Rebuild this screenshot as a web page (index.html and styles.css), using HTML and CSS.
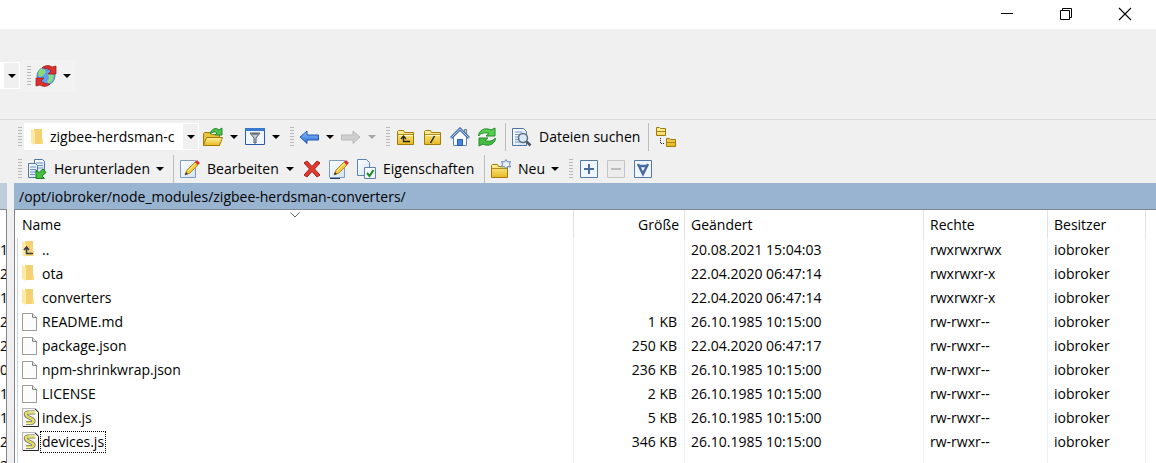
FILE: index.html
```
<!DOCTYPE html>
<html lang="de">
<head>
    <meta charset="UTF-8">
    <title>zigbee-herdsman-converters</title>
    <meta name="viewport" content="width=device-width, initial-scale=1.0">
    <link rel="stylesheet" href="styles.css">
</head>
<body>
    <!-- shared icons -->
    <svg class="sprite" aria-hidden="true">
        <defs>
            <linearGradient id="gold" x1="0" y1="0" x2="0" y2="1">
                <stop offset="0" stop-color="#fff2a0"/><stop offset="1" stop-color="#e6b820"/>
            </linearGradient>
            <linearGradient id="paper" x1="0" y1="0" x2="1" y2="1">
                <stop offset="0" stop-color="#ffffff"/><stop offset="1" stop-color="#cfe3f7"/>
            </linearGradient>
            <linearGradient id="blue" x1="0" y1="0" x2="0" y2="1">
                <stop offset="0" stop-color="#8fc0ff"/><stop offset="1" stop-color="#2a6bd8"/>
            </linearGradient>
        </defs>
        <symbol id="folder" viewBox="0 0 14 18">
            <path d="M3 1h8v10l1 1v4H3z" fill="#f5d271"/>
            <path d="M0 1l4 2v14l-4-2z" fill="#ffe9a6"/>
            <path d="M10 11h2v5h-2z" fill="#fbdc80"/>
        </symbol>
        <symbol id="file" viewBox="0 0 16 20">
            <path d="M.5 1.500h10l4 4v13H.5z" fill="#fcfcfc" stroke="#9a9a9a"/>
            <path d="M10.500 1.500v4h4" fill="#e8e8e8" stroke="#858585"/>
        </symbol>
        <symbol id="script" viewBox="0 0 18 20">
            <path d="M.5 .5h13l3 3v15H.5z" fill="#f6f6f6" stroke="#b5b5b5"/>
            <path d="M13 1l3.500 3.500v14H1" fill="none" stroke="#222"/>
            <path d="M13 4.500H6.500C3 4.500 3 7.500 6 9l4 2c3 2 1 4-1 4H4" fill="none" stroke="#77776c" stroke-width="4"/>
            <path d="M13 4.500H6.500C3 4.500 3 7.500 6 9l4 2c3 2 1 4-1 4H4" fill="none" stroke="#e2dd62" stroke-width="2.500"/>
            <path d="M7 4h6M4 15.500h5" stroke="#f4f2b4"/>
        </symbol>
        <symbol id="gold-folder" viewBox="0 0 20 20">
            <path d="M1.500 17.500v-13l1-1h5l1 2h9v12z" fill="url(#gold)" stroke="#a17a0c"/>
            <path d="M2 7.500h15" stroke="#b58d18"/><path d="M3 8.500h14" stroke="#fff8c8"/>
        </symbol>
        <symbol id="pencil-page" viewBox="0 0 20 20">
            <path d="M.5 1.500h15v17H.5z" fill="url(#paper)" stroke="#7d9cc0"/>
            <path d="M5 16l2-5 8-8 3 3-8 8z" fill="#f9c93b" stroke="#b88a30"/>
            <path d="M8 12l8-8" stroke="#fff0a0"/>
            <path d="M15 3l2-2 3 3-2 2z" fill="#d83434"/>
            <path d="M5 16l1-3 2 2z" fill="#333"/>
        </symbol>
    </svg>

    <header class="titlebar">
        <button type="button" class="caption" aria-label="Minimieren">
            <svg width="14" height="14"><path d="M1 6.500h12" stroke="#000"/></svg>
        </button>
        <button type="button" class="caption" aria-label="Verkleinern">
            <svg width="14" height="14"><path d="M1.500 3.500h9v9h-9zM3.500 3.500v-2h9v9h-2" fill="none" stroke="#000"/></svg>
        </button>
        <button type="button" class="caption" aria-label="Schließen">
            <svg width="14" height="14"><path d="M1 1l12 12M13 1L1 13" stroke="#000" stroke-width="1.100"/></svg>
        </button>
    </header>

    <div class="session-bar">
        <button type="button" class="combo-end" aria-label="Übertragungsoptionen"><span class="caret"></span></button>
        <div class="sync-group">
            <span class="grip"></span>
            <button type="button" class="tool split" aria-label="Synchronisieren">
                <svg width="22" height="22" viewBox="0 0 22 22">
                    <circle cx="11" cy="11" r="9" fill="#5f9ff0" stroke="#4a83bd"/>
                    <path d="M3 8c1-3 3-5 5-5l3 4-3 4-4 1zM13 9l6 1-1 5-4 4-2-3 2-2z" fill="#8bdb7a"/>
                    <path d="M7 3c3-3 7-3 10-1l4-1v8h-8l3-3c-2-2-5-3-9-3z" fill="#dd3030" stroke="#961616" stroke-width=".7"/>
                    <path d="M15 19c-3 3-7 3-10 1l-4 1v-8h8l-3 3c2 2 5 3 9 3z" fill="#dd3030" stroke="#961616" stroke-width=".7"/>
                </svg>
            </button>
            <button type="button" class="drop" aria-label="Mehr"><span class="caret"></span></button>
        </div>
    </div>

    <main class="panels">
        <section class="local">
            <div class="local-path"></div>
            <ul class="local-list">
                <li>1</li><li>2</li><li>1</li><li>2</li><li>2</li>
                <li>0</li><li>1</li><li>1</li><li>2</li><li>2</li>
            </ul>
        </section>

        <section class="remote">
            <div class="toolbar">
                <span class="grip"></span>
                <div class="combo">
                    <svg width="14" height="18"><use href="#folder"/></svg>
                    <select aria-label="Verzeichnis"><option>zigbee-herdsman-c</option></select>
                    <span class="combo-arrow"><span class="caret"></span></span>
                </div>
                <button type="button" class="tool split" aria-label="Verzeichnis öffnen">
                    <svg width="22" height="20" viewBox="0 0 22 20">
                        <path d="M1.500 18.500v-12l1-1h5l2 2h8v11z" fill="#e9c33a" stroke="#a17a0c"/>
                        <path d="M1.500 18.500l3-8h16l-3 8z" fill="url(#gold)" stroke="#a17a0c"/>
                        <path d="M8 7c1-5 6-7 9-4l3-2v7h-7l2-2c-2-2-4-1-7 1z" fill="#4fc24f" stroke="#258a2c"/>
                    </svg>
                </button>
                <button type="button" class="drop" aria-label="Mehr"><span class="caret"></span></button>
                <button type="button" class="tool split" aria-label="Filter">
                    <svg width="20" height="18" viewBox="0 0 20 18">
                        <path d="M.5 .5h19v16H.5z" fill="#f0f6ff" stroke="#2a5ba5"/>
                        <path d="M0 0h20v3H0z" fill="#3b78cf"/>
                        <path d="M5 5h10l-4 5v5H9v-5z" fill="#c5c9cf" stroke="#555b64"/>
                        <path d="M7 6h6" stroke="#444"/>
                    </svg>
                </button>
                <button type="button" class="drop" aria-label="Mehr"><span class="caret"></span></button>
                <span class="grip"></span>
                <button type="button" class="tool split" aria-label="Zurück">
                    <svg width="20" height="14" viewBox="0 0 20 14"><path d="M1 7l7-6v4h11.500v5H8v3.500z" fill="url(#blue)" stroke="#2257ae"/></svg>
                </button>
                <button type="button" class="drop" aria-label="Mehr"><span class="caret"></span></button>
                <button type="button" class="tool split" aria-label="Vorwärts" disabled>
                    <svg width="20" height="14" viewBox="0 0 20 14"><path d="M19 7l-7-6v4H.5v5H12v3.500z" fill="#cfcfcf" stroke="#bababa"/></svg>
                </button>
                <button type="button" class="drop" aria-label="Mehr" disabled><span class="caret"></span></button>
                <span class="grip"></span>
                <button type="button" class="tool" aria-label="Übergeordnetes Verzeichnis">
                    <svg width="20" height="20" viewBox="0 0 20 20"><use href="#gold-folder"/><path d="M14 14.500H7.500V10M5 12l2.500-3 2.500 3" fill="none" stroke="#222" stroke-width="1.300"/></svg>
                </button>
                <button type="button" class="tool" aria-label="Stammverzeichnis">
                    <svg width="20" height="20" viewBox="0 0 20 20"><use href="#gold-folder"/><path d="M7.500 16l4-7" stroke="#222" stroke-width="1.500"/></svg>
                </button>
                <button type="button" class="tool" aria-label="Heimverzeichnis">
                    <svg width="20" height="20" viewBox="0 0 20 20">
                        <path d="M14.500 2.500h2v5h-2z" fill="#ddd" stroke="#687d99"/>
                        <path d="M3.500 9v9.500h13V9L10 3z" fill="#f7fbff" stroke="#6284ad"/>
                        <path d="M1 11l9-9 9 9" fill="none" stroke="#4b74a8" stroke-width="3"/>
                        <path d="M1.500 10.500l8.500-8.500 8.500 8.500" fill="none" stroke="#b0cbea"/>
                        <path d="M7.500 12.500h5v6h-5z" fill="#4285e8" stroke="#2b5da8"/>
                    </svg>
                </button>
                <button type="button" class="tool" aria-label="Aktualisieren">
                    <svg width="20" height="20" viewBox="0 0 20 20">
                        <path d="M1.500 9C2 3 8 0 14 3l4-2v8h-9l3-2.500C8 5 4 6 1.500 9z" fill="#54cf50" stroke="#218a28"/>
                        <path d="M18.500 11c-.5 6-6.500 9-12.500 6l-4 2v-8h9l-3 2.500c4 1.500 8 .5 10.500-2.500z" fill="#45bd43" stroke="#218a28"/>
                    </svg>
                </button>
                <span class="sep"></span>
                <button type="button" class="labelled find">
                    <svg width="20" height="20" viewBox="0 0 20 20">
                        <path d="M.5 1.500h11l3 3v14H.5z" fill="url(#paper)" stroke="#4f75a5"/>
                        <path d="M3 5h7M3 7.500h9M3 10h3M3 12.500h3M3 15h5" stroke="#7597c2"/>
                        <circle cx="11" cy="11" r="4.500" fill="#d7e8fb" stroke="#606b79" stroke-width="1.500"/>
                        <path d="M14.500 14.500l4 4" stroke="#4d5663" stroke-width="2.500"/>
                    </svg>
                    Dateien suchen
                </button>
                <span class="sep"></span>
                <button type="button" class="tool" aria-label="Verzeichnisbaum">
                    <svg width="22" height="22" viewBox="0 0 22 22">
                        <path d="M.5 9.500v-8h3l1 1h5v7zM10.500 20.500v-8h3l1 1h5v7z" fill="url(#gold)" stroke="#a17a0c"/>
                        <path d="M1 5.500h8M11 16.500h8" stroke="#ad8414"/>
                        <path d="M4.500 12v5.500H9" fill="none" stroke="#222" stroke-dasharray="1 1"/>
                    </svg>
                </button>
            </div>

            <div class="toolbar">
                <span class="grip"></span>
                <button type="button" class="labelled download">
                    <svg width="20" height="20" viewBox="0 0 20 20">
                        <path d="M7.500 .5h8l2 2v12h-10z" fill="url(#paper)" stroke="#4f75a5"/>
                        <path d="M9 4h7M9 6.500h7M9 9h7" stroke="#6c8fbc"/>
                        <path d="M1.500 4.500h7l2 2v12h-9z" fill="url(#paper)" stroke="#4f75a5"/>
                        <path d="M3 8h6M3 10.500h6M3 13h6M3 15.500h5" stroke="#6c8fbc"/>
                        <path d="M9 19.500V11l3 2.500 4-3.500 3 3.500-4 3.500 2.500 2.500z" fill="#43c13c" stroke="#1f7d22"/>
                    </svg>
                    Herunterladen
                </button>
                <button type="button" class="drop" aria-label="Mehr"><span class="caret"></span></button>
                <span class="sep"></span>
                <button type="button" class="labelled edit">
                    <svg width="20" height="20"><use href="#pencil-page"/></svg>
                    Bearbeiten
                </button>
                <button type="button" class="drop" aria-label="Mehr"><span class="caret"></span></button>
                <button type="button" class="tool" aria-label="Löschen">
                    <svg width="18" height="18" viewBox="0 0 18 18"><path d="M1 3l3-2 5 5.500L14 1l3 2-5.500 6 5.500 6-3 2-5-5.500L4 17l-3-2 5.500-6z" fill="#e03a2e" stroke="#a81c18"/></svg>
                </button>
                <button type="button" class="tool" aria-label="Umbenennen">
                    <svg width="20" height="20" viewBox="0 0 20 20"><use href="#pencil-page"/><path d="M1 19.500h10" stroke="#223a66"/></svg>
                </button>
                <button type="button" class="labelled properties">
                    <svg width="20" height="20" viewBox="0 0 20 20">
                        <path d="M1.500 .5h9l3 3v13h-12z" fill="url(#paper)" stroke="#5f83b0"/>
                        <path d="M8.500 8.500h11v11h-11z" fill="#f5faff" stroke="#5f83b0"/>
                        <path d="M11 14l2.500 3 4-6" fill="none" stroke="#228a28" stroke-width="2"/>
                    </svg>
                    Eigenschaften
                </button>
                <span class="sep"></span>
                <button type="button" class="labelled new">
                    <svg width="20" height="20" viewBox="0 0 20 20">
                        <path d="M.5 18.500v-12l1-1h5l1 2h9v11z" fill="url(#gold)" stroke="#a17a0c"/>
                        <path d="M1 9.500h15" stroke="#b58d18"/>
                        <path d="M15 .5l1.500 2.500 3-.5-1 2.500 1 3-3-.5L15 10l-1.500-2.500-3 .5 1-3-1-2.500 3 .5z" fill="#e6f1fd" stroke="#6886ad"/>
                    </svg>
                    Neu
                </button>
                <button type="button" class="drop" aria-label="Mehr"><span class="caret"></span></button>
                <span class="grip"></span>
                <button type="button" class="tool" aria-label="Auswählen">
                    <svg width="18" height="18"><path d="M.5 .5h17v17H.5z" fill="#eff6ff" stroke="#5479a8"/><path d="M4 9h10M9 4v10" stroke="#486c9c" stroke-width="2"/></svg>
                </button>
                <button type="button" class="tool" aria-label="Abwählen" disabled>
                    <svg width="18" height="18"><path d="M.5 .5h17v17H.5z" fill="#ececec" stroke="#c4c4c4"/><path d="M4 9h10" stroke="#bcbcbc" stroke-width="2"/></svg>
                </button>
                <button type="button" class="tool" aria-label="Auswahl umkehren">
                    <svg width="18" height="18"><path d="M.5 .5h17v17H.5z" fill="#eff6ff" stroke="#5479a8"/><path d="M4 4l5 10 5-10M5 6h8" fill="none" stroke="#486c9c" stroke-width="2.500"/></svg>
                </button>
            </div>

            <div class="path">/opt/iobroker/node_modules/zigbee-herdsman-converters/</div>

            <div class="list">
                <table>
                    <colgroup>
                        <col>
                        <col class="col-size">
                        <col class="col-changed">
                        <col class="col-rights">
                        <col class="col-owner">
                        <col class="col-rest">
                    </colgroup>
                    <thead>
                        <tr>
                            <th>Name<svg class="sort" width="10" height="6"><path d="M.5 .5L5 5 9.500 .5" fill="none" stroke="#666"/></svg></th>
                            <th class="size">Größe</th><th>Geändert</th><th>Rechte</th><th>Besitzer</th><td></td>
                        </tr>
                    </thead>
                    <tbody>
                        <tr>
                            <td><span class="entry"><svg width="16" height="20" viewBox="0 0 16 20"><use href="#folder" width="14" height="18"/><path d="M11 13.500H4.500V8M2 10l2.500-3L7 10" fill="none" stroke="#333c4a" stroke-width="1.500"/></svg><span>..</span></span></td>
                            <td class="size"></td><td>20.08.2021 15:04:03</td><td>rwxrwxrwx</td><td>iobroker</td><td></td>
                        </tr>
                        <tr>
                            <td><span class="entry"><svg width="16" height="20" viewBox="0 0 16 20"><use href="#folder" width="14" height="18"/></svg><span>ota</span></span></td>
                            <td class="size"></td><td>22.04.2020 06:47:14</td><td>rwxrwxr-x</td><td>iobroker</td><td></td>
                        </tr>
                        <tr>
                            <td><span class="entry"><svg width="16" height="20" viewBox="0 0 16 20"><use href="#folder" width="14" height="18"/></svg><span>converters</span></span></td>
                            <td class="size"></td><td>22.04.2020 06:47:14</td><td>rwxrwxr-x</td><td>iobroker</td><td></td>
                        </tr>
                        <tr>
                            <td><span class="entry"><svg width="16" height="20"><use href="#file"/></svg><span>README.md</span></span></td>
                            <td class="size">1 KB</td><td>26.10.1985 10:15:00</td><td>rw-rwxr--</td><td>iobroker</td><td></td>
                        </tr>
                        <tr>
                            <td><span class="entry"><svg width="16" height="20"><use href="#file"/></svg><span>package.json</span></span></td>
                            <td class="size">250 KB</td><td>22.04.2020 06:47:17</td><td>rw-rwxr--</td><td>iobroker</td><td></td>
                        </tr>
                        <tr>
                            <td><span class="entry"><svg width="16" height="20"><use href="#file"/></svg><span>npm-shrinkwrap.json</span></span></td>
                            <td class="size">236 KB</td><td>26.10.1985 10:15:00</td><td>rw-rwxr--</td><td>iobroker</td><td></td>
                        </tr>
                        <tr>
                            <td><span class="entry"><svg width="16" height="20"><use href="#file"/></svg><span>LICENSE</span></span></td>
                            <td class="size">2 KB</td><td>26.10.1985 10:15:00</td><td>rw-rwxr--</td><td>iobroker</td><td></td>
                        </tr>
                        <tr>
                            <td><span class="entry"><svg width="18" height="20"><use href="#script"/></svg><span>index.js</span></span></td>
                            <td class="size">5 KB</td><td>26.10.1985 10:15:00</td><td>rw-rwxr--</td><td>iobroker</td><td></td>
                        </tr>
                        <tr>
                            <td><span class="entry focused"><svg width="18" height="20"><use href="#script"/></svg><span>devices.js</span></span></td>
                            <td class="size">346 KB</td><td>26.10.1985 10:15:00</td><td>rw-rwxr--</td><td>iobroker</td><td></td>
                        </tr>
                        <tr><td></td><td></td><td></td><td></td><td></td><td></td></tr>
                    </tbody>
                </table>
            </div>
        </section>
    </main>
</body>
</html>
```
FILE: styles.css
```
* {
    box-sizing: border-box;
}

body {
    margin: 0;
    height: 100vh;
    display: flex;
    flex-direction: column;
    overflow: hidden;
    background: #f0f0f0;
    color: #000;
    font-family: "Open Sans", "Noto Sans", sans-serif;
    font-size: 14px;
    line-height: 20px;
}

button,
select {
    border: none;
    padding: 0;
    background: none;
    color: inherit;
    font: inherit;
}

button {
    display: flex;
    align-items: center;
    justify-content: center;
    flex-shrink: 0;
}

svg {
    display: block;
    flex-shrink: 0;
}

.sprite {
    position: absolute;
    width: 0;
    height: 0;
}

/* title bar */
.titlebar {
    display: flex;
    justify-content: flex-end;
    height: 29px;
    padding-right: 2px;
    background: #fff;
    flex-shrink: 0;
}

.caption {
    width: 59px;
    height: 28px;
}

.caret {
    border: 4px solid transparent;
    border-top-color: #000;
    border-bottom: none;
}

button:disabled .caret {
    border-top-color: #a5a5a5;
}

.grip {
    width: 4px;
    height: 20px;
    margin: 0 2px 0 6px;
    flex-shrink: 0;
    background: repeating-linear-gradient(#b8b8b8 0 1px, transparent 1px 3px);
}

.sep {
    width: 1px;
    height: 28px;
    margin: 0 4px 0 5px;
    flex-shrink: 0;
    background: #bdbdbd;
}

/* upper bar */
.session-bar {
    display: flex;
    align-items: center;
    gap: 1px;
    height: 91px;
    flex-shrink: 0;
    padding-top: 3px;
    border-bottom: 1px solid #dadada;
}

.combo-end {
    width: 20px;
    height: 27px;
    border: 1px solid #fff;
    border-left-width: 4px;
}

.sync-group {
    display: flex;
    align-items: center;
    width: 54px;
    height: 32px;
    background: #f2f2f2;
}

.tool {
    width: 27px;
    height: 28px;
}

.tool.split {
    width: 26px;
}

.drop {
    width: 16px;
    height: 28px;
}

/* panels */
.panels {
    display: flex;
    gap: 7px;
    flex: 1;
    min-height: 0;
}

.local {
    width: 7px;
    padding-top: 63px;
    overflow: hidden;
    display: flex;
    flex-direction: column;
}

.local-path {
    height: 27px;
    flex-shrink: 0;
    background: #bfcddb;
    border-bottom: 1px solid #828790;
}

.local-list {
    flex: 1;
    margin: 0;
    padding: 28px 0 0;
    overflow: hidden;
    list-style: none;
    line-height: 24px;
    background: #fff;
    border-right: 1px solid #828790;
}

.remote {
    flex: 1;
    min-width: 0;
    display: flex;
    flex-direction: column;
    gap: 3px;
    padding-top: 2px;
}

.toolbar {
    display: flex;
    align-items: center;
    height: 29px;
    flex-shrink: 0;
}

.toolbar .grip:first-child {
    margin-left: 4px;
}

.combo {
    display: flex;
    align-items: center;
    width: 175px;
    height: 27px;
    flex-shrink: 0;
    padding: 0 1px 0 7px;
    background: #fff;
    margin-right: 1px;
}

.combo select {
    flex: 1;
    min-width: 0;
    height: 25px;
    padding-left: 5px;
    appearance: none;
}

.combo-arrow {
    display: flex;
    align-items: center;
    justify-content: center;
    width: 15px;
    height: 25px;
    background: #f0f0f0;
}

.labelled {
    justify-content: flex-start;
    gap: 7px;
    height: 28px;
    padding-left: 2px;
    white-space: nowrap;
}

.find {
    width: 133px;
}

.download {
    width: 128px;
    padding-left: 3px;
}

.edit {
    width: 104px;
}

.properties {
    width: 127px;
    padding-left: 4px;
}

.new {
    width: 58px;
}

.path {
    height: 27px;
    margin-top: -3px;
    padding: 4px 5px 0;
    flex-shrink: 0;
    background: #99b4d1;
    border-bottom: 1px solid #828790;
}

/* file list */
.list {
    flex: 1;
    margin-top: -3px;
    padding-left: 2px;
    overflow: hidden;
    background: #fff;
    border-left: 1px solid #828790;
}

table {
    width: 100%;
    table-layout: fixed;
    border-collapse: separate;
    border-spacing: 0;
}

.col-size {
    width: 111px;
}

.col-changed {
    width: 239px;
}

.col-rights {
    width: 124px;
}

.col-owner {
    width: 98px;
}

.col-rest {
    width: 10px;
}

th,
td {
    height: 24px;
    padding: 0 6px;
    border-right: 1px solid #eaf1fb;
    text-align: left;
    font-weight: normal;
    white-space: nowrap;
}

thead th {
    position: relative;
    height: 28px;
    padding-top: 2px;
    border-right-color: #e2e2e2;
}

th:first-child,
td:first-child {
    padding-left: 4px;
    border-left: 1px solid #c9d6ee;
}

th:first-child {
    border-left-color: #fff;
}

th:last-child,
td:last-child {
    border-right: none;
}

.size {
    text-align: right;
}

td.size {
    padding-right: 7px;
}

th.size {
    padding-right: 5px;
}

.sort {
    position: absolute;
    top: 2px;
    left: calc(50% - 6px);
}

.entry {
    display: flex;
    align-items: center;
    gap: 3px;
}

.entry span {
    padding: 0 1px;
}

.entry svg[width="18"] {
    margin-right: -2px;
}

.focused span {
    outline: 1px dotted #000;
}
```
